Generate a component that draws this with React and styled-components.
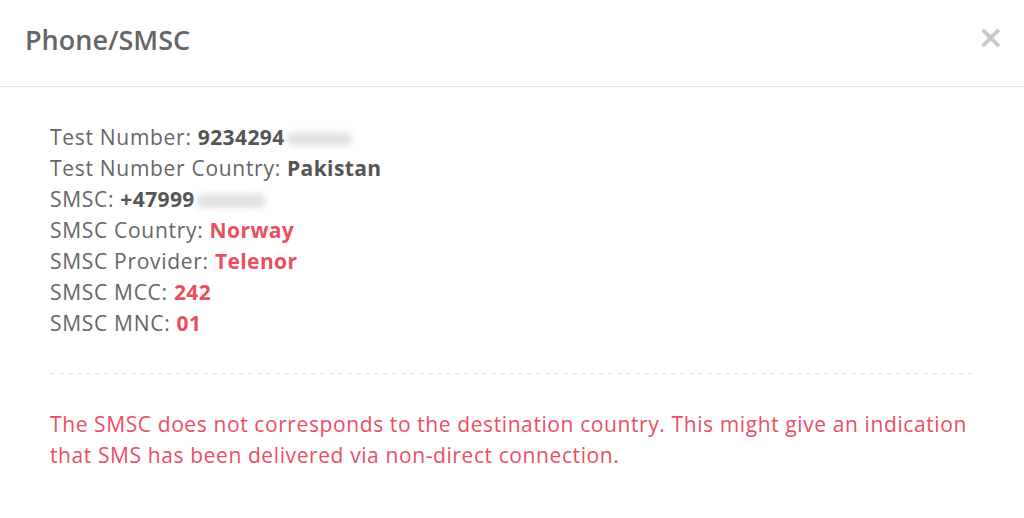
import React from "react";
import styled, { createGlobalStyle } from "styled-components";

const GlobalStyle = createGlobalStyle`
  body {
    margin: 0;
    background: #fff;
    font-family: "Open Sans", "Noto Sans", sans-serif;
  }
`;

const Modal = styled.div`
  width: 1024px;
  min-height: 518px;
  background: #fff;
`;

const Header = styled.div`
  display: flex;
  align-items: center;
  justify-content: space-between;
  padding: 21px 20px 27px 25px;
  border-bottom: 1px solid #e3e3e3;
`;

const Title = styled.h4`
  margin: 0;
  font-size: 27px;
  line-height: 38px;
  font-weight: 600;
  color: #666;
`;

const Close = styled.button`
  border: 0;
  background: none;
  padding: 0;
  margin-top: -6px;
  font-family: "DejaVu Sans", sans-serif;
  font-size: 32px;
  line-height: 32px;
  font-weight: 700;
  color: #c8c8c8;
  cursor: pointer;
`;

const Body = styled.div`
  padding: 35px 49px 0 50px;
`;

const InfoList = styled.div`
  display: flex;
  flex-direction: column;
`;

const Row = styled.div`
  font-size: 21px;
  line-height: 31px;
  letter-spacing: 0.7px;
  color: #666;
`;

const Value = styled.span`
  font-weight: 700;
  letter-spacing: 0.4px;
  color: ${(p) => (p.$alert ? "#e9505f" : "#555")};
`;

const Blur = styled.span`
  display: inline-block;
  width: ${(p) => p.$w}px;
  height: 14px;
  margin-left: 1px;
  vertical-align: -1px;
  border-radius: 7px;
  background: #e2e2e2;
  filter: blur(3px);
`;

const Divider = styled.hr`
  margin: 34px 0 35px;
  border: 0;
  height: 1px;
  background: repeating-linear-gradient(
    to right,
    #e2e2e2 0 5px,
    transparent 5px 9px
  );
`;

const Warning = styled.p`
  margin: 0;
  font-size: 21px;
  line-height: 31px;
  letter-spacing: 0.6px;
  color: #e9505f;
`;

const rows = [
  { label: "Test Number", value: "9234294", blur: 66 },
  { label: "Test Number Country", value: "Pakistan" },
  { label: "SMSC", value: "+47999", blur: 70 },
  { label: "SMSC Country", value: "Norway", alert: true },
  { label: "SMSC Provider", value: "Telenor", alert: true },
  { label: "SMSC MCC", value: "242", alert: true },
  { label: "SMSC MNC", value: "01", alert: true },
];

export default function App() {
  return (
    <>
      <GlobalStyle />
      <Modal>
        <Header>
          <Title>Phone/SMSC</Title>
          <Close aria-label="Close">×</Close>
        </Header>
        <Body>
          <InfoList>
            {rows.map((r) => (
              <Row key={r.label}>
                {r.label}: <Value $alert={r.alert}>{r.value}</Value>
                {r.blur && <Blur $w={r.blur} />}
              </Row>
            ))}
          </InfoList>
          <Divider />
          <Warning>
            The SMSC does not corresponds to the destination country. This
            might give an indication that SMS has been delivered via non-direct
            connection.
          </Warning>
        </Body>
      </Modal>
    </>
  );
}
